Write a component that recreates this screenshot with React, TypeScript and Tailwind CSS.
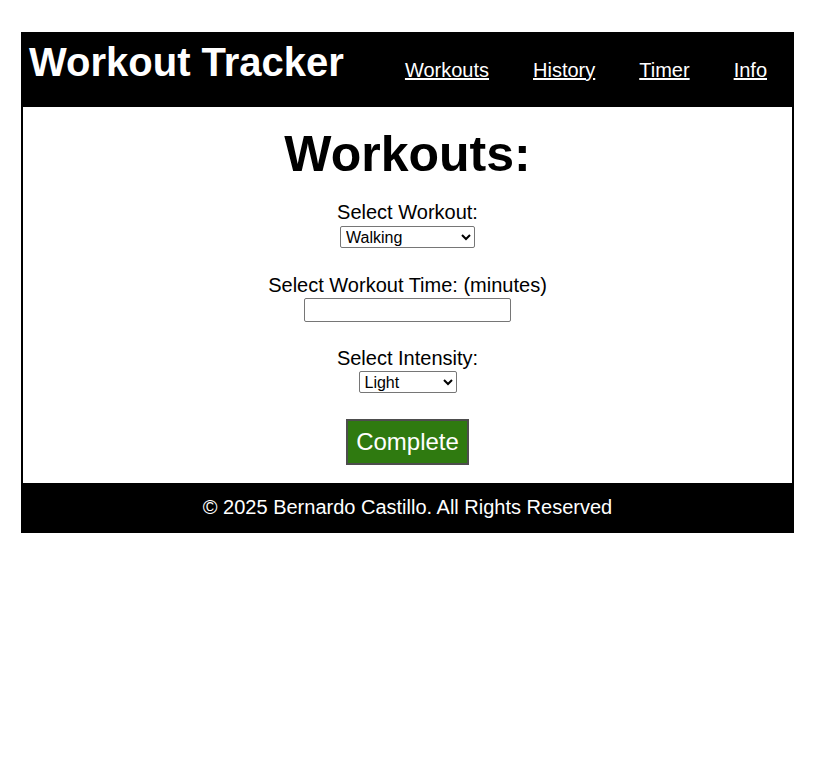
import React from "react";

export default function App() {
  const font = { fontFamily: '"Liberation Sans", Arial, sans-serif' };
  return (
    <div className="min-h-[768px] bg-white pt-[32px]" style={font}>
      <div className="mx-auto w-[773px] border-2 border-black">
        <header className="flex h-[73px] items-start justify-between bg-black text-white">
          <h1 className="ml-[6px] mt-[5px] text-[40px] font-bold leading-[46px]">Workout Tracker</h1>
          <nav className="mr-[25px] mt-[25px] flex gap-[44px] text-[20px] leading-[23px]">
            <a href="#" className="underline">Workouts</a>
            <a href="#" className="underline">History</a>
            <a href="#" className="underline">Timer</a>
            <a href="#" className="underline">Info</a>
          </nav>
        </header>
        <main className="flex flex-col items-center pb-[18px] text-black">
          <h2 className="mt-[18px] text-[50px] font-bold leading-[58px]">Workouts:</h2>
          <label className="mt-[18px] text-[20px] leading-[23px]">Select Workout:</label>
          <select className="mt-[2px] h-[22px] w-[135px] rounded-[2px] border border-[#767676] px-[1px] text-[16px] leading-[18px]">
            <option>Walking</option>
            <option>Running</option>
            <option>Cycling</option>
          </select>
          <label className="mt-[26px] text-[20px] leading-[23px]">Select Workout Time: (minutes)</label>
          <input type="text" className="mt-[1px] h-[24px] w-[207px] rounded-[2px] border border-[#767676]" />
          <label className="mt-[25px] text-[20px] leading-[23px]">Select Intensity:</label>
          <select className="mt-[1px] h-[22px] w-[98px] rounded-[2px] border border-[#767676] px-[1px] text-[16px] leading-[18px]">
            <option>Light</option>
            <option>Moderate</option>
            <option>Intense</option>
          </select>
          <button className="mt-[26px] h-[46px] w-[123px] border-2 border-[#4d4d4d] bg-[#2f7a10] text-[24px] text-white">Complete</button>
        </main>
        <footer className="flex h-[48px] items-center justify-center bg-black text-[20px] text-white">
          © 2025 Bernardo Castillo. All Rights Reserved
        </footer>
      </div>
    </div>
  );
}
